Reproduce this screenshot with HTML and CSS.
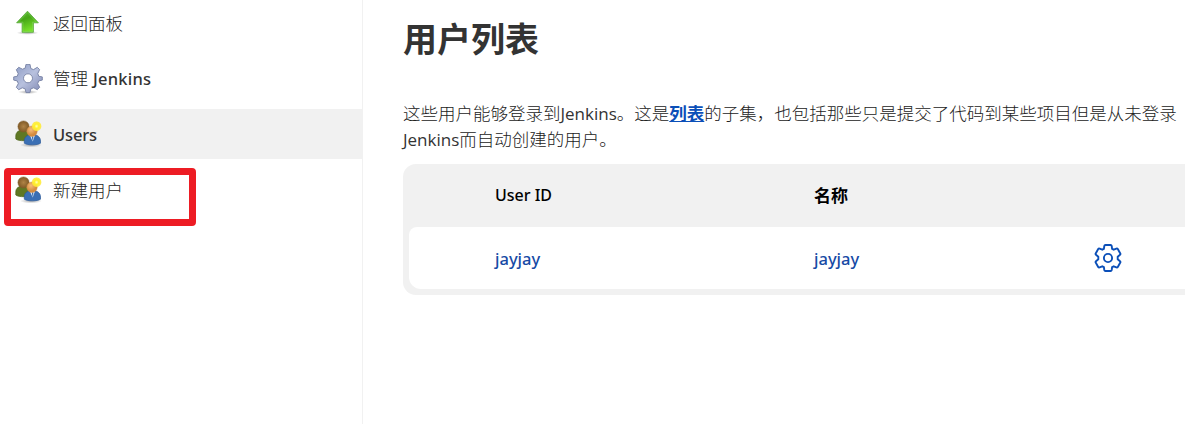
FILE: index.html
```html
<!DOCTYPE html>
<html lang="zh-CN">
<head>
<meta charset="utf-8">
<title>用户列表</title>
<link rel="stylesheet" href="styles.css">
</head>
<body>
<svg class="defs" width="0" height="0" aria-hidden="true">
  <defs>
    <linearGradient id="green" x1="0" y1="0" x2="0.4" y2="1"><stop offset="0" stop-color="#5fbc3c"/><stop offset=".45" stop-color="#46a616"/><stop offset="1" stop-color="#78e12a"/></linearGradient>
    <linearGradient id="steel" x1="0" y1="0" x2="1" y2="1"><stop offset="0" stop-color="#8b9ac3"/><stop offset=".5" stop-color="#b8c1de"/><stop offset="1" stop-color="#7e87b2"/></linearGradient>
    <radialGradient id="brown"><stop offset="0" stop-color="#b08346"/><stop offset="1" stop-color="#805a26"/></radialGradient>
    <radialGradient id="skin" cx=".4" cy=".35"><stop offset="0" stop-color="#f7bd7a"/><stop offset="1" stop-color="#d58c40"/></radialGradient>
    <radialGradient id="glow"><stop offset="0" stop-color="#ffffc0"/><stop offset=".4" stop-color="#fff12b"/><stop offset=".8" stop-color="#ffeb35" stop-opacity=".85"/><stop offset="1" stop-color="#ffe936" stop-opacity="0"/></radialGradient>
    <radialGradient id="shade"><stop offset="0" stop-color="#555" stop-opacity=".5"/><stop offset="1" stop-color="#555" stop-opacity="0"/></radialGradient>
    <symbol id="people" viewBox="0 0 30 30">
      <ellipse cx="18" cy="26" rx="11" ry="2.400" fill="url(#shade)"/>
      <path d="M2.800 17c0-4 3-6 7.700-6s8 2 8 6v3c-2 2-13 2.500-15.700 0z" fill="#5f7823" stroke="#4a6119" stroke-width=".7"/>
      <circle cx="10.500" cy="7.500" r="5.600" fill="url(#brown)" stroke="#805c2c" stroke-width=".5"/>
      <path d="M11.300 22c0-4 3-6.500 8-6.500s8.200 2.500 8.200 6.500v2.200c-3 2.200-13 2.200-16.200 0z" fill="#3a6fb4" stroke="#2c5a99" stroke-width=".7"/>
      <path d="M16.500 15.500h5.700l-2.500 7z" fill="#e9f2ff"/><path d="M19.400 17l1 1-.6 4.500-1-4.500z" fill="#376dac"/>
      <circle cx="19" cy="12.200" r="5.200" fill="url(#skin)" stroke="#c88a47" stroke-width=".5"/>
      <circle cx="23.600" cy="7.200" r="5.300" fill="url(#glow)"/>
    </symbol>
  </defs>
</svg>
<div class="page">
  <nav class="side">
    <a class="task"><svg class="icon" viewBox="0 0 30 30"><ellipse cx="14.500" cy="24.800" rx="11" ry="2" fill="url(#shade)"/><path d="M14.500 3.200L25.400 14.800h-5v9.500H9.100V14.800H3.600z" fill="url(#green)" stroke="#57a939" stroke-width=".8"/><path d="M14.500 4.700L23.300 14.100h-3.800v9.400h-9.500v-9.400H5.400z" fill="none" stroke="#8edb6d" stroke-width=".6" opacity=".7"/></svg><span>返回面板</span></a>
    <a class="task"><svg class="icon" viewBox="0 0 30 30"><ellipse cx="15" cy="28" rx="10" ry="2" fill="url(#shade)"/><g transform="translate(15 14.300)"><path fill="url(#steel)" fill-rule="evenodd" stroke="#7681a4" stroke-width=".9" stroke-linejoin="round" d="M-2-14h4l.8 4.200 2.700 1.100L9.300-11l2.300 2.300-1.800 4L10.800-2l3.500.6v3.200l-3.500.8-1.100 2.700 2 3.700L9.300 11.400l-3.600-1.900-2.900 1.100L2 14.300h-4l-.8-3.700-2.900-1.100-3.600 1.900L-11.700 9l2-3.700-1.100-2.700-3.500-.8v-3.200l3.500-.6 1-2.700-1.900-3.900L-9.300-11l3.800 1.900 2.700-1.100zM0-4.500A4.500 4.500 0 1 0 0 4.500A4.500 4.500 0 1 0 0-4.500z"/></g></svg><span>管理 <b class="latin jenkins">Jenkins</b></span></a>
    <a class="task active"><svg class="icon"><use href="#people"/></svg><b class="latin users">Users</b></a>
    <a class="task marked"><svg class="icon"><use href="#people"/></svg><span>新建用户</span></a>
  </nav>
  <main class="main">
    <h1>用户列表</h1>
    <p class="intro">这些用户能够登录到<span class="word">Jenkins</span>。这是<a class="link">列表</a>的子集，也包括那些只是提交了代码到某些项目但是从未登录<br><span class="word">Jenkins</span>而自动创建的用户。</p>
    <div class="table">
      <div class="row head"><span class="latin">User ID</span><span>名称</span></div>
      <div class="row body"><a class="latin">jayjay</a><a class="latin">jayjay</a>
        <svg class="cog" viewBox="-14 -14 28 28"><path d="M-2.600-13h5.200q.9 0 1.100 1l.4 2.800 1.600.9 2.700-1.100q.9-.3 1.400.5l2.500 4.300q.4.800-.3 1.400L9.700-1.200v2.400L12 3.200q.7.600.3 1.400L9.800 8.900q-.5.800-1.400.5L5.700 8.300l-1.600.9-.4 2.800q-.2 1-1.100 1h-5.200q-.9 0-1.100-1l-.4-2.800-1.600-.9-2.700 1.100q-.9.300-1.400-.5l-2.500-4.300q-.4-.8.300-1.400L-9.700 1.200v-2.400L-12-3.200q-.7-.6-.3-1.400l2.500-4.300q.5-.8 1.400-.5l2.700 1.100 1.600-.9.400-2.800q.2-1 1.100-1z"/><circle r="4.100"/></svg>
      </div>
    </div>
  </main>
</div>
</body>
</html>
```
FILE: styles.css
```css
*, *::after { box-sizing: border-box; }
body { margin: 0; background: #fff; color: #222; font-family: "Noto Sans", "Noto Sans CJK SC", sans-serif; font-size: 17.5px; overflow: hidden; }
.defs { position: absolute; }
.page { display: flex; height: 424px; overflow: hidden; }
.side { width: 363px; flex: none; border-right: 1px solid #f1f1f1; display: flex; flex-direction: column; gap: 5.600px; margin-top: -2px; }
.task { display: flex; align-items: center; height: 50px; flex: none; padding-left: 13px; gap: 10px; line-height: 26px; font-family: "Noto Sans CJK SC", sans-serif; font-weight: 300; position: relative; }
.task.active { background: #f1f1f1; }
.icon { width: 30px; height: 30px; flex: none; }
.latin { font-family: "Noto Sans", sans-serif; font-weight: 500; font-size: 16.500px; }
.task .latin { color: #333; }
.jenkins { margin-left: 1px; letter-spacing: .25px; }
.users { letter-spacing: -.15px; padding-top: 2px; }
.marked::after { content: ""; position: absolute; left: 4px; top: 3px; width: 192px; height: 58px; border: 7px solid #ed1c24; border-radius: 4px; }
.main { flex: none; width: 822px; padding-left: 40px; }
h1 { margin: 13px 0 0; height: 50px; line-height: 50px; color: #333; font-size: 34px; font-weight: 700; font-family: "Noto Sans CJK SC", sans-serif; }
.intro { margin: 37px 0 12px; height: 52px; line-height: 26px; white-space: nowrap; font-family: "Noto Sans CJK SC", sans-serif; font-weight: 300; }
.word { font-family: "Open Sans", sans-serif; font-weight: 400; font-size: 17px; line-height: 1; color: #333; }
.link { color: #0b4fb8; font-weight: 700; text-decoration: underline; }
.table { width: 800px; height: 131px; padding: 0 6px 6px; background: #f1f1f1; border-radius: 13px; }
.row { display: grid; grid-template-columns: 319px 280px 30px; align-items: center; padding-left: 86px; }
.head { height: 63px; color: #000; font-family: "Noto Sans CJK SC", sans-serif; font-weight: 700; font-size: 17px; line-height: 24px; padding-bottom: 1px; }
.head .latin { font-size: 16px; }
.body { height: 62px; background: #fff; border-radius: 8px 8px 12px 12px; color: #164aa5; }
.cog { width: 28px; height: 28px; overflow: visible; fill: none; stroke: #0b4fb8; stroke-width: 1.900; stroke-linejoin: round; }
```
